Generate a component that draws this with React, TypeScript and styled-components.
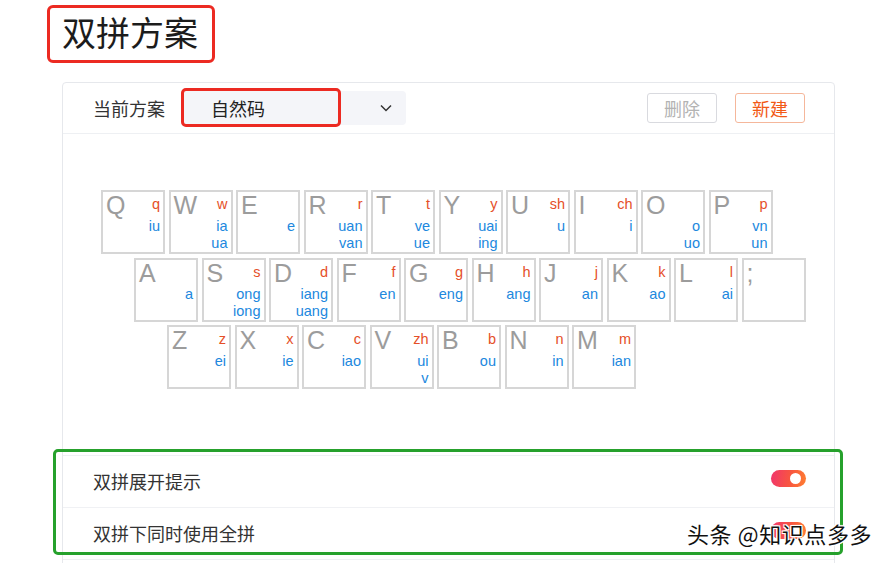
import styled, { createGlobalStyle } from 'styled-components'

type KeyData = {
  cap: string
  initial?: string
  finals?: string[]
}

const rows: { indent: number; keys: KeyData[] }[] = [
  {
    indent: 38,
    keys: [
      { cap: 'Q', initial: 'q', finals: ['iu'] },
      { cap: 'W', initial: 'w', finals: ['ia', 'ua'] },
      { cap: 'E', finals: ['e'] },
      { cap: 'R', initial: 'r', finals: ['uan', 'van'] },
      { cap: 'T', initial: 't', finals: ['ve', 'ue'] },
      { cap: 'Y', initial: 'y', finals: ['uai', 'ing'] },
      { cap: 'U', initial: 'sh', finals: ['u'] },
      { cap: 'I', initial: 'ch', finals: ['i'] },
      { cap: 'O', finals: ['o', 'uo'] },
      { cap: 'P', initial: 'p', finals: ['vn', 'un'] },
    ],
  },
  {
    indent: 71,
    keys: [
      { cap: 'A', finals: ['a'] },
      { cap: 'S', initial: 's', finals: ['ong', 'iong'] },
      { cap: 'D', initial: 'd', finals: ['iang', 'uang'] },
      { cap: 'F', initial: 'f', finals: ['en'] },
      { cap: 'G', initial: 'g', finals: ['eng'] },
      { cap: 'H', initial: 'h', finals: ['ang'] },
      { cap: 'J', initial: 'j', finals: ['an'] },
      { cap: 'K', initial: 'k', finals: ['ao'] },
      { cap: 'L', initial: 'l', finals: ['ai'] },
      { cap: ';' },
    ],
  },
  {
    indent: 104,
    keys: [
      { cap: 'Z', initial: 'z', finals: ['ei'] },
      { cap: 'X', initial: 'x', finals: ['ie'] },
      { cap: 'C', initial: 'c', finals: ['iao'] },
      { cap: 'V', initial: 'zh', finals: ['ui', 'v'] },
      { cap: 'B', initial: 'b', finals: ['ou'] },
      { cap: 'N', initial: 'n', finals: ['in'] },
      { cap: 'M', initial: 'm', finals: ['ian'] },
    ],
  },
]

const GlobalStyle = createGlobalStyle`
  html, body {
    margin: 0;
    padding: 0;
    background: #fff;
  }
  body {
    font-family: "Noto Sans CJK SC", "Liberation Sans", sans-serif;
    color: #222;
  }
`

const Page = styled.div`
  position: relative;
  width: 889px;
  height: 563px;
  overflow: hidden;
  box-sizing: border-box;
  padding: 5px 0 0 47px;
`

const TitleBox = styled.div`
  box-sizing: border-box;
  width: 168px;
  height: 58px;
  padding-left: 12px;
  border: 3px solid #ec2a22;
  border-radius: 6px;
  font-size: 34px;
  line-height: 48px;
  color: #1c1c1c;
`

const Card = styled.div`
  box-sizing: border-box;
  width: 773px;
  height: 600px;
  margin: 19px 0 0 15px;
  border: 1px solid #e6e8ec;
  border-radius: 4px;
  background: #fff;
`

const Header = styled.div`
  display: flex;
  align-items: center;
  height: 50px;
  padding: 0 29px 0 30px;
  border-bottom: 1px solid #eef0f3;
`

const Label = styled.span`
  font-size: 18px;
  color: #333;
  margin-right: 16px;
`

const Select = styled.div`
  position: relative;
  box-sizing: border-box;
  display: flex;
  align-items: center;
  justify-content: space-between;
  width: 225px;
  height: 34px;
  padding: 0 14px 0 30px;
  border-radius: 4px;
  background: #f4f5f9;
  font-size: 18px;
  color: #222;
`

const RedMark = styled.div`
  position: absolute;
  left: 0;
  top: -3px;
  box-sizing: border-box;
  width: 160px;
  height: 39px;
  border: 3px solid #ec2a22;
  border-radius: 5px;
`

const Buttons = styled.div`
  display: flex;
  gap: 18px;
  margin-left: auto;
`

const Button = styled.button<{ $primary?: boolean }>`
  box-sizing: border-box;
  width: 70px;
  height: 30px;
  padding: 0;
  border-radius: 3px;
  background: #fff;
  font-family: inherit;
  font-size: 18px;
  line-height: 28px;
  border: 1px solid ${(p) => (p.$primary ? '#f5b79b' : '#d9dadf')};
  color: ${(p) => (p.$primary ? '#f25a16' : '#b3b3b3')};
`

const Keyboard = styled.div`
  display: flex;
  flex-direction: column;
  gap: 3.5px;
  padding-top: 56px;
`

const KeyRow = styled.div<{ $indent: number }>`
  display: flex;
  gap: 3.5px;
  padding-left: ${(p) => p.$indent}px;
`

const Key = styled.div`
  box-sizing: border-box;
  display: flex;
  flex-direction: column;
  width: 64px;
  height: 64px;
  padding: 0 3px 0 3px;
  border: 2px solid #d6d6d6;
  font-family: "Liberation Sans", Arial, sans-serif;
`

const KeyTop = styled.div`
  display: flex;
  justify-content: space-between;
  height: 26px;
`

const Cap = styled.span`
  font-size: 25px;
  line-height: 26px;
  color: #9c9c9c;
`

const Initial = styled.span`
  font-size: 14.5px;
  line-height: 25px;
  color: #e54f28;
`

const Finals = styled.div`
  text-align: right;
  font-size: 14.5px;
  line-height: 17px;
  color: #2188de;
`

const Settings = styled.div`
  position: relative;
  margin-top: 66px;
  border-top: 1px solid #eef0f3;
`

const SettingRow = styled.div`
  display: flex;
  align-items: center;
  justify-content: space-between;
  height: 49px;
  padding: 0 28px 2px 30px;
  border-bottom: 1px solid #f0f1f4;
  font-size: 18px;
  color: #333;
`

const Toggle = styled.div`
  position: relative;
  width: 35px;
  height: 17px;
  margin-bottom: 4px;
  border-radius: 9px;
  background: linear-gradient(100deg, #f1356d 0%, #f8563f 55%, #ff7f30 100%);

  &::after {
    content: '';
    position: absolute;
    right: 5px;
    top: 3px;
    width: 11px;
    height: 11px;
    border-radius: 50%;
    background: #fff;
  }
`

const GreenMark = styled.div`
  position: absolute;
  left: -10px;
  top: -7px;
  box-sizing: border-box;
  width: 790px;
  height: 106px;
  border: 3px solid #26a12c;
  border-radius: 5px;
  pointer-events: none;
`

const Watermark = styled.div`
  position: absolute;
  left: 687px;
  top: 518px;
  font-size: 22px;
  line-height: 30px;
  letter-spacing: 0.6px;
  color: #111;
  white-space: nowrap;
  text-shadow: 0 0 2px #fff, 0 0 2px #fff, 1px 1px 0 #fff, -1px -1px 0 #fff,
    1px -1px 0 #fff, -1px 1px 0 #fff;
`

const Chevron = () => (
  <svg width="12" height="8" viewBox="0 0 12 8">
    <path d="M1 1.5l5 5 5-5" fill="none" stroke="#333" strokeWidth="1.5" />
  </svg>
)

const App = () => {
  return (
    <Page>
      <GlobalStyle />
      <TitleBox>双拼方案</TitleBox>
      <Card>
        <Header>
          <Label>当前方案</Label>
          <Select>
            <span>自然码</span>
            <Chevron />
            <RedMark />
          </Select>
          <Buttons>
            <Button>删除</Button>
            <Button $primary>新建</Button>
          </Buttons>
        </Header>
        <Keyboard>
          {rows.map((row, i) => (
            <KeyRow key={i} $indent={row.indent}>
              {row.keys.map((k) => (
                <Key key={k.cap}>
                  <KeyTop>
                    <Cap>{k.cap}</Cap>
                    {k.initial && <Initial>{k.initial}</Initial>}
                  </KeyTop>
                  <Finals>
                    {(k.finals || []).map((f) => (
                      <div key={f}>{f}</div>
                    ))}
                  </Finals>
                </Key>
              ))}
            </KeyRow>
          ))}
        </Keyboard>
        <Settings>
          <SettingRow>
            <span>双拼展开提示</span>
            <Toggle />
          </SettingRow>
          <SettingRow>
            <span>双拼下同时使用全拼</span>
            <Toggle />
          </SettingRow>
          <GreenMark />
        </Settings>
      </Card>
      <Watermark>头条 @知识点多多</Watermark>
    </Page>
  )
}

export default App
